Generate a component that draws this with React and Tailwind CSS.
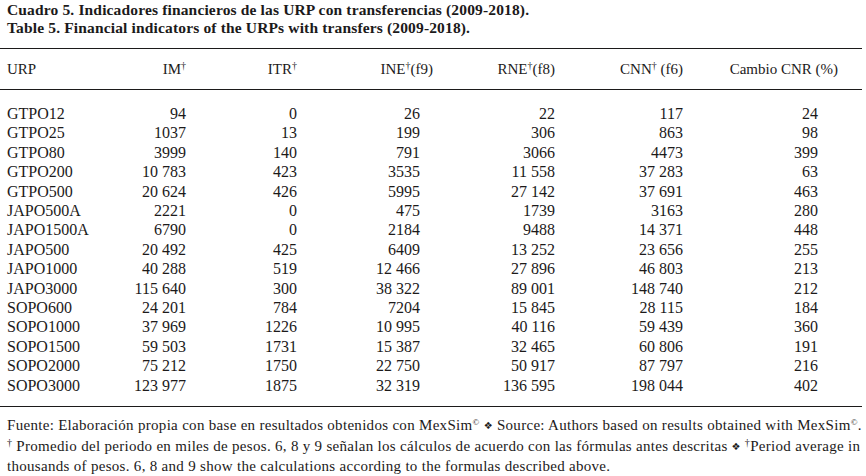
const rows = [
  ['GTPO12', '94', '0', '26', '22', '117', '24'],
  ['GTPO25', '1037', '13', '199', '306', '863', '98'],
  ['GTPO80', '3999', '140', '791', '3066', '4473', '399'],
  ['GTPO200', '10 783', '423', '3535', '11 558', '37 283', '63'],
  ['GTPO500', '20 624', '426', '5995', '27 142', '37 691', '463'],
  ['JAPO500A', '2221', '0', '475', '1739', '3163', '280'],
  ['JAPO1500A', '6790', '0', '2184', '9488', '14 371', '448'],
  ['JAPO500', '20 492', '425', '6409', '13 252', '23 656', '255'],
  ['JAPO1000', '40 288', '519', '12 466', '27 896', '46 803', '213'],
  ['JAPO3000', '115 640', '300', '38 322', '89 001', '148 740', '212'],
  ['SOPO600', '24 201', '784', '7204', '15 845', '28 115', '184'],
  ['SOPO1000', '37 969', '1226', '10 995', '40 116', '59 439', '360'],
  ['SOPO1500', '59 503', '1731', '15 387', '32 465', '60 806', '191'],
  ['SOPO2000', '75 212', '1750', '22 750', '50 917', '87 797', '216'],
  ['SOPO3000', '123 977', '1875', '32 319', '136 595', '198 044', '402'],
];

const grid = 'grid grid-cols-[100px_86px_111px_136px_122px_128px_155px]';

function Dag() {
  return <span className="text-[10px] relative -top-[5px]">†</span>;
}

function Sep() {
  return <span className="text-[10px] font-['DejaVu_Sans'] mx-[4px] relative -top-[1px]">❖</span>;
}

export default function App() {
  return (
    <div className="w-[866px] h-[476px] bg-white text-[#1c1a1a] font-['Liberation_Serif',serif] overflow-hidden">
      <div className="pl-[7px] pt-[1px] font-bold text-[15.5px] tracking-[0.15px] leading-[18px]">
        <div>Cuadro 5. Indicadores financieros de las URP con transferencias (2009-2018).</div>
        <div>Table 5. Financial indicators of the URPs with transfers (2009-2018).</div>
      </div>

      <div className="mt-[11px] w-[862px] border-t-[1.5px] border-[#1c1a1a]" />
      <div className={`${grid} h-[40px] items-center text-[15px]`}>
        <div className="pl-[7px]">URP</div>
        <div className="text-right">IM<Dag /></div>
        <div className="text-right">ITR<Dag /></div>
        <div className="text-right">INE<Dag />(f9)</div>
        <div className="text-right">RNE<Dag />(f8)</div>
        <div className="text-right">CNN<Dag /> (f6)</div>
        <div className="text-right">Cambio CNR (%)</div>
      </div>
      <div className="w-[862px] border-t-[1.5px] border-[#1c1a1a]" />

      <div className="pt-[14px] pb-[11px] text-[16px] leading-[19.4px]">
        {rows.map((r) => (
          <div key={r[0]} className={grid}>
            <div className="pl-[7px]">{r[0]}</div>
            <div className="text-right">{r[1]}</div>
            <div className="text-right">{r[2]}</div>
            <div className="text-right pr-[13px]">{r[3]}</div>
            <div className="text-right">{r[4]}</div>
            <div className="text-right">{r[5]}</div>
            <div className="text-right pr-[20px]">{r[6]}</div>
          </div>
        ))}
      </div>
      <div className="w-[862px] border-t-[1.5px] border-[#1c1a1a]" />

      <div className="pl-[7px] pt-[9px] text-[15px] tracking-[0.3px] leading-[19px] whitespace-nowrap">
        <div>
          Fuente: Elaboración propia con base en resultados obtenidos con MexSim<span className="text-[9px] relative -top-[5px]">©</span>
          <Sep />
          Source: Authors based on results obtained with MexSim<span className="text-[9px] relative -top-[5px]">©</span>.
        </div>
        <div>
          <span className="text-[10px] relative -top-[5px]">†</span> Promedio del periodo en miles de pesos. 6, 8 y 9 señalan los cálculos de acuerdo con las fórmulas antes descritas
          <Sep />
          <span className="text-[10px] relative -top-[5px]">†</span>Period average in
        </div>
        <div>thousands of pesos. 6, 8 and 9 show the calculations according to the formulas described above.</div>
      </div>
    </div>
  );
}
